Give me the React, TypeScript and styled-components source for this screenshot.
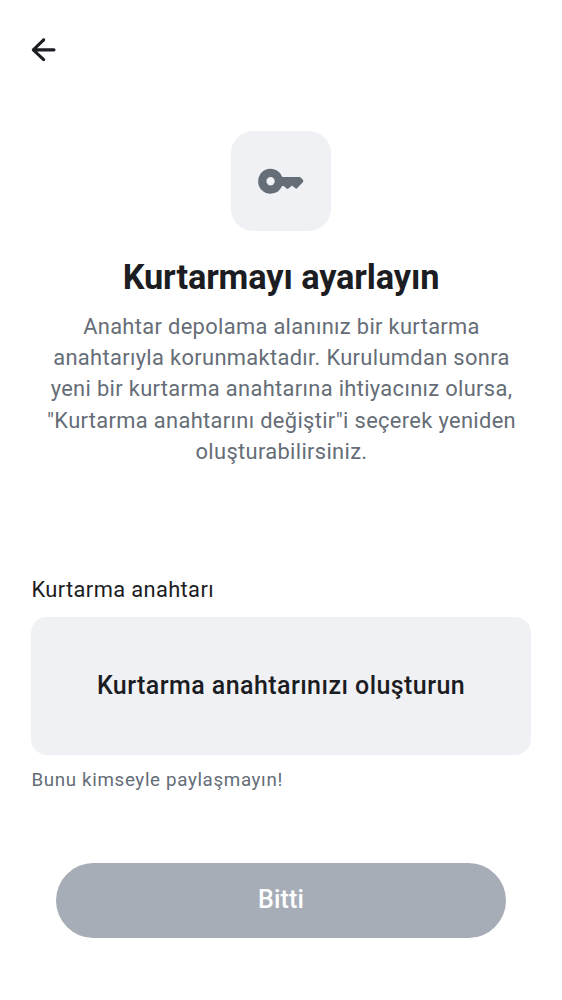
import React from 'react';
import styled, { createGlobalStyle } from 'styled-components';

const GlobalStyle = createGlobalStyle`
  * { box-sizing: border-box; }
  body { margin: 0; background: #fff; font-family: Roboto, sans-serif; }
  p, h1 { margin: 0; }
`;

const Screen = styled.main`
  display: flex;
  flex-direction: column;
  width: 562px;
  height: 1000px;
  padding: 0 31px;
  color: #1b1d22;
  background: #fff;
`;

const TopBar = styled.header`
  display: flex;
  align-items: center;
  height: 99px;
`;

const BackButton = styled.button`
  display: flex;
  padding: 0;
  border: 0;
  background: none;
  color: inherit;
`;

const Intro = styled.section`
  display: flex;
  flex-direction: column;
  align-items: center;
  height: 474px;
  padding-top: 32px;
  text-align: center;
`;

const IconTile = styled.div`
  display: flex;
  align-items: center;
  justify-content: center;
  width: 100px;
  height: 100px;
  border-radius: 22px;
  background: #f0f1f5;
  color: #656d77;
`;

const Title = styled.h1`
  margin-top: 25px;
  font-size: 34.375px;
  font-weight: 700;
  line-height: 43px;
  letter-spacing: -0.12px;
  white-space: nowrap;
`;

const Description = styled.p`
  margin-top: 12px;
  padding-left: 1px;
  color: #656d77;
  font-size: 21.875px;
  line-height: 31.2px;
  letter-spacing: 0.34px;
  white-space: nowrap;
`;

const Label = styled.p`
  padding: 1px 0 0 0.5px;
  font-size: 21.875px;
  line-height: 31px;
  letter-spacing: 0.37px;
`;

const KeyButton = styled.button`
  height: 138px;
  margin-top: 12px;
  padding: 0 0 2px;
  border: 0;
  border-radius: 16px;
  background: #f0f1f5;
  color: inherit;
  font: 500 25px/37px Roboto, sans-serif;
  letter-spacing: 0.43px;
`;

const Hint = styled.p`
  margin-top: 12px;
  padding-left: 0.5px;
  color: #656d77;
  font-size: 18.75px;
  line-height: 27px;
  letter-spacing: 0.65px;
`;

const DoneButton = styled.button`
  height: 75px;
  margin: 68.5px 25px 0;
  padding: 0 0 1px;
  border: 0;
  border-radius: 38px;
  background: #a6adb7;
  color: #fff;
  font: 500 25px/37px Roboto, sans-serif;
  letter-spacing: 0.15px;
`;

const lines = [
  'Anahtar depolama alanınız bir kurtarma',
  'anahtarıyla korunmaktadır. Kurulumdan sonra',
  'yeni bir kurtarma anahtarına ihtiyacınız olursa,',
  '"Kurtarma anahtarını değiştir"i seçerek yeniden',
  'oluşturabilirsiniz.',
];

export default function App() {
  return (
    <>
      <GlobalStyle />
      <Screen lang="tr">
        <TopBar>
          <BackButton aria-label="Geri">
            <svg width="25" height="25" viewBox="4.6 3.8 16 16" fill="currentColor">
              <path d="m12 19-6.6-6.3a.9.9 0 0 1-.3-.7c0-.3.1-.5.3-.7L12 4.9c.4-.4 1-.4 1.4 0s.4 1 0 1.4L8.5 11H19.3a1 1 0 1 1 0 2H8.5l4.9 4.6c.4.4.4 1 0 1.4s-1 .4-1.4 0Z" />
            </svg>
          </BackButton>
        </TopBar>
        <Intro>
          <IconTile>
            <svg width="50" height="50" viewBox="0 0 24 24" fill="currentColor">
              <path fillRule="evenodd" d="M7 18.1a6 6 0 1 1 5.65-8H20.9a.8.8 0 0 1 .55.22l1.05 1.05a.9.9 0 0 1 0 1.2l-2.8 2.9a.6.6 0 0 1-.8.03L17.3 14.2l-1.7 1.4a.7.7 0 0 1-.9 0l-1.45-1.15h-.75A6 6 0 0 1 7 18.1Zm0-4a2 2 0 1 0 0-4 2 2 0 0 0 0 4Z" />
            </svg>
          </IconTile>
          <Title>Kurtarmayı ayarlayın</Title>
          <Description>
            {lines.map((line, i) => (
              <React.Fragment key={line}>{i > 0 && <br />}{line}</React.Fragment>
            ))}
          </Description>
        </Intro>
        <Label>Kurtarma anahtarı</Label>
        <KeyButton>Kurtarma anahtarınızı oluşturun</KeyButton>
        <Hint>Bunu kimseyle paylaşmayın!</Hint>
        <DoneButton disabled>Bitti</DoneButton>
      </Screen>
    </>
  );
}
